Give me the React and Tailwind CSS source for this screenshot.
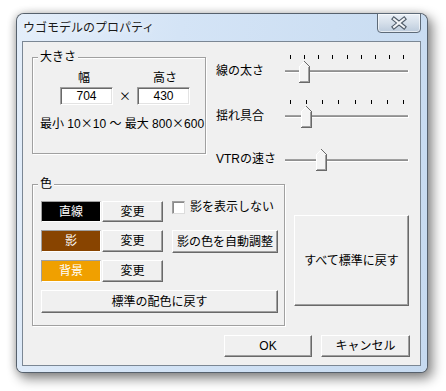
import React from "react";

function Btn({ className, children }) {
  return (
    <div
      className={
        "flex items-center justify-center bg-[#f0f0f0] border border-t-white border-l-white border-r-[#696969] border-b-[#696969] shadow-[inset_-1px_-1px_0_#a0a0a0] leading-none whitespace-nowrap " +
        className
      }
    >
      {children}
    </div>
  );
}

function Slider({ ticks, thumbX, thumbY = 6 }) {
  const xs = ticks
    ? Array.from({ length: ticks }, (_, i) => Math.round(7 + (i * 113) / (ticks - 1)))
    : [];
  const L = thumbX;
  const T = thumbY;
  return (
    <svg width="128" height="28" shapeRendering="crispEdges" className="shrink-0">
      {xs.map((x) => (
        <rect key={x} x={x} y={0} width={1} height={4} fill="#000" />
      ))}
      <rect x="2" y="15" width="123" height="1" fill="#a0a0a0" />
      <rect x="2" y="16" width="123" height="1" fill="#8f8f8f" />
      <rect x="2" y="17" width="124" height="1" fill="#fff" />
      <rect x="125" y="15" width="1" height="3" fill="#fff" />
      <polygon
        points={`${L},${T + 5} ${L + 5},${T} ${L + 10},${T + 5} ${L + 10},${T + 21} ${L},${T + 21}`}
        fill="#f4f4f4"
      />
      <rect x={L} y={T + 5} width="1" height="16" fill="#fff" />
      <line x1={L + 0.5} y1={T + 5.5} x2={L + 5.5} y2={T + 0.5} stroke="#fff" strokeWidth="1" />
      <line x1={L + 5.5} y1={T + 0.5} x2={L + 10.5} y2={T + 5.5} stroke="#696969" strokeWidth="1" />
      <rect x={L + 10} y={T + 5} width="1" height="17" fill="#696969" />
      <rect x={L} y={T + 21} width="11" height="1" fill="#696969" />
      <rect x={L + 9} y={T + 6} width="1" height="15" fill="#a0a0a0" />
      <rect x={L + 1} y={T + 20} width="9" height="1" fill="#a0a0a0" />
    </svg>
  );
}

function Swatch({ className, children }) {
  return (
    <div
      className={
        "w-[60px] flex items-center justify-center text-white border border-t-[#a0a0a0] border-l-[#a0a0a0] border-b-white border-r-white leading-none " +
        className
      }
    >
      {children}
    </div>
  );
}

function Field({ value }) {
  return (
    <div className="w-[53px] h-[18px] bg-white border border-t-[#a0a0a0] border-l-[#a0a0a0] border-b-white border-r-white shadow-[inset_1px_1px_0_#696969,inset_-1px_-1px_0_#e3e3e3] flex items-center justify-center leading-none">
      {value}
    </div>
  );
}

export default function App() {
  return (
    <div className="w-[446px] h-[391px] bg-white pt-[14px] pl-[17px] font-['Liberation_Sans','Noto_Sans_CJK_JP',sans-serif] text-[12px] text-black overflow-hidden">
      <div className="w-[410px] h-[358px] rounded-t-[7px] rounded-b-[6px] shadow-[0_0_0_1px_#56616d,4px_5px_12px_2px_rgba(0,0,0,0.45),-2px_0_8px_rgba(0,0,0,0.2)] bg-[linear-gradient(100deg,#e4eefa_0%,#d4e4f6_35%,#c6daf0_100%)] flex flex-col">
        <div className="h-[27px] flex items-start justify-between">
          <div className="ml-[6px] mt-[5px] leading-[15px] text-[#1a1a1a] font-['Noto_Sans_CJK_JP',sans-serif] [text-shadow:0_0_6px_#ffffff]">
            ウゴモデルのプロパティ
          </div>
          <div className="-mt-[1px] mr-[6px] w-[44px] h-[20px] rounded-b-[4px] border border-[#5d6a78] bg-[linear-gradient(180deg,#eaf0f7_0%,#d5dfea_50%,#bccbdc_100%)] shadow-[inset_0_0_0_1px_rgba(255,255,255,0.6)]">
            <svg width="42" height="18" viewBox="0 0 42 18">
              <path d="M16 5 L26 13 M26 5 L16 13" stroke="#4f5b68" strokeWidth="4.2" strokeLinecap="square" fill="none" />
              <path d="M16 5 L26 13 M26 5 L16 13" stroke="#f2f4f7" strokeWidth="2" strokeLinecap="square" fill="none" />
            </svg>
          </div>
        </div>

        <div className="ml-[5px] w-[399px] h-[325px] border border-[#7b8794] bg-[#f0f0f0] flex flex-col pl-[9px]">
          {/* top row */}
          <div className="h-[142px] flex shrink-0">
            <div className="relative mt-[15px] w-[174px] h-[97px] border border-[#a0a0a0] shadow-[inset_1px_1px_0_#ffffff,1px_1px_0_#ffffff] flex flex-col shrink-0">
              <div className="absolute -top-[8px] left-[5px] px-[2px] bg-[#f0f0f0] leading-[14px]">大きさ</div>
              <div className="mt-[14px] flex leading-[13px]">
                <span className="ml-[45px]">幅</span>
                <span className="ml-[63px]">高さ</span>
              </div>
              <div className="mt-[2px] ml-[27px] flex items-center">
                <Field value="704" />
                <span className="w-[24px] text-center leading-none font-['Noto_Sans_CJK_JP',sans-serif]">×</span>
                <Field value="430" />
              </div>
              <div className="mt-[11px] ml-[7px] leading-[13px] whitespace-nowrap">
                最小 10<span className="font-['Noto_Sans_CJK_JP',sans-serif]">×</span>10 ～ 最大 800
                <span className="font-['Noto_Sans_CJK_JP',sans-serif]">×</span>600
              </div>
            </div>

            <div className="ml-[10px] flex flex-col">
              <div className="mt-[13px] flex">
                <div className="w-[67px] mt-[9px] leading-[14px] whitespace-nowrap shrink-0">線の太さ</div>
                <Slider ticks={9} thumbX={16} thumbY={6} />
              </div>
              <div className="mt-[17px] flex">
                <div className="w-[67px] mt-[9px] leading-[14px] whitespace-nowrap shrink-0">揺れ具合</div>
                <Slider ticks={8} thumbX={18} thumbY={6} />
              </div>
              <div className="mt-[16px] flex">
                <div className="w-[67px] mt-[8px] leading-[14px] whitespace-nowrap shrink-0">VTRの速さ</div>
                <Slider thumbX={33} thumbY={5} />
              </div>
            </div>
          </div>

          {/* middle row */}
          <div className="flex shrink-0">
            <div className="relative w-[253px] h-[142px] border border-[#a0a0a0] shadow-[inset_1px_1px_0_#ffffff,1px_1px_0_#ffffff] flex flex-col shrink-0">
              <div className="absolute -top-[8px] left-[5px] px-[2px] bg-[#f0f0f0] leading-[14px]">色</div>
              <div className="mt-[16px] ml-[8px] flex items-start h-[21px]">
                <Swatch className="h-[21px] bg-black">直線</Swatch>
                <Btn className="ml-[1px] w-[61px] h-[21px]">変更</Btn>
                <div className="ml-[9px] w-[13px] h-[13px] bg-white border border-t-[#a0a0a0] border-l-[#a0a0a0] border-b-[#dcdcdc] border-r-[#dcdcdc] shadow-[inset_1px_1px_0_#8a8a8a]" />
                <span className="ml-[5px] leading-[13px] whitespace-nowrap">影を表示しない</span>
              </div>
              <div className="mt-[8px] ml-[8px] flex items-start h-[22px]">
                <Swatch className="h-[22px] bg-[#884400]">影</Swatch>
                <Btn className="ml-[1px] w-[61px] h-[22px]">変更</Btn>
                <Btn className="ml-[9px] w-[106px] h-[23px]">影の色を自動調整</Btn>
              </div>
              <div className="mt-[8px] ml-[8px] flex items-start h-[22px]">
                <Swatch className="h-[22px] bg-[#f0a000]">背景</Swatch>
                <Btn className="ml-[1px] w-[61px] h-[22px]">変更</Btn>
              </div>
              <Btn className="mt-[8px] ml-[8px] w-[237px] h-[23px]">標準の配色に戻す</Btn>
            </div>
            <Btn className="ml-[9px] mt-[31px] w-[115px] h-[91px]">すべて標準に戻す</Btn>
          </div>

          {/* bottom row */}
          <div className="mt-[9px] flex justify-end pr-[10px]">
            <Btn className="w-[88px] h-[22px]">OK</Btn>
            <Btn className="ml-[9px] w-[89px] h-[22px]">キャンセル</Btn>
          </div>
        </div>
      </div>
    </div>
  );
}
